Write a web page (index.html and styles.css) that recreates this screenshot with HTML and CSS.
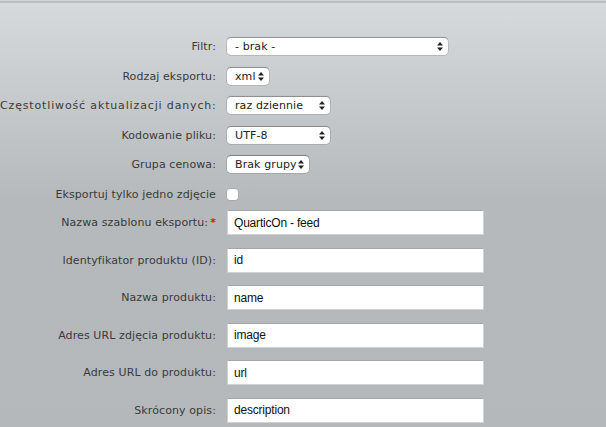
FILE: index.html
```html
<!DOCTYPE html>
<html lang="pl">
<head>
    <meta charset="UTF-8">
    <title>Eksport produktów</title>
    <link rel="stylesheet" href="styles.css">
</head>
<body>
    <div class="panel">
        <form class="form">
            <div class="row">
                <label class="label">Filtr:</label>
                <span class="select-wrap wide">
                    <select><option>- brak -</option></select>
                    <svg class="arrows" width="6" height="9" viewBox="0 0 6 9"><path d="M3 0L6 3.5H0z M3 9L0 5.5H6z" fill="#222"/></svg>
                </span>
            </div>
            <div class="row">
                <label class="label">Rodzaj eksportu:</label>
                <span class="select-wrap xs">
                    <select><option>xml</option></select>
                    <svg class="arrows" width="6" height="9" viewBox="0 0 6 9"><path d="M3 0L6 3.5H0z M3 9L0 5.5H6z" fill="#222"/></svg>
                </span>
            </div>
            <div class="row">
                <label class="label long">Częstotliwość aktualizacji danych:</label>
                <span class="select-wrap md">
                    <select><option>raz dziennie</option></select>
                    <svg class="arrows" width="6" height="9" viewBox="0 0 6 9"><path d="M3 0L6 3.5H0z M3 9L0 5.5H6z" fill="#222"/></svg>
                </span>
            </div>
            <div class="row">
                <label class="label">Kodowanie pliku:</label>
                <span class="select-wrap md">
                    <select><option>UTF-8</option></select>
                    <svg class="arrows" width="6" height="9" viewBox="0 0 6 9"><path d="M3 0L6 3.5H0z M3 9L0 5.5H6z" fill="#222"/></svg>
                </span>
            </div>
            <div class="row">
                <label class="label">Grupa cenowa:</label>
                <span class="select-wrap sm">
                    <select><option>Brak grupy</option></select>
                    <svg class="arrows" width="6" height="9" viewBox="0 0 6 9"><path d="M3 0L6 3.5H0z M3 9L0 5.5H6z" fill="#222"/></svg>
                </span>
            </div>
            <div class="row row-check">
                <label class="label">Eksportuj tylko jedno zdjęcie</label>
                <input type="checkbox" class="check">
            </div>
            <div class="row row-input">
                <label class="label">Nazwa szablonu eksportu:<span class="req">*</span></label>
                <input type="text" class="text" value="QuarticOn - feed">
            </div>
            <div class="row row-input">
                <label class="label">Identyfikator produktu (ID):</label>
                <input type="text" class="text" value="id">
            </div>
            <div class="row row-input">
                <label class="label">Nazwa produktu:</label>
                <input type="text" class="text" value="name">
            </div>
            <div class="row row-input">
                <label class="label">Adres URL zdjęcia produktu:</label>
                <input type="text" class="text" value="image">
            </div>
            <div class="row row-input">
                <label class="label">Adres URL do produktu:</label>
                <input type="text" class="text" value="url">
            </div>
            <div class="row row-input">
                <label class="label">Skrócony opis:</label>
                <input type="text" class="text" value="description">
            </div>
        </form>
    </div>
</body>
</html>
```

FILE: styles.css
```css
html, body {
    margin: 0;
    height: 100%;
}
body {
    font-family: 'DejaVu Sans', Verdana, sans-serif;
    font-size: 11px;
    letter-spacing: 0.1px;
    color: #3a3a3a;
    background: #b5b8ba;
    overflow: hidden;
}
.panel {
    border-top: 1px solid #d2d2d2;
    box-shadow: inset 0 2px 0 #bdbdbd;
    background: linear-gradient(#d7dadc 0px, #b6b9bb 200px, #b5b8ba 100%);
    min-height: 100%;
    padding-top: 37px;
    box-sizing: border-box;
}
.row {
    display: flex;
    align-items: center;
    height: 17px;
    margin-bottom: 12.5px;
}
.label {
    width: 227px;
    box-sizing: border-box;
    flex: none;
    text-align: right;
    padding-right: 11px;
    white-space: nowrap;
}
.label.long {
    letter-spacing: 0.85px;
}
.req {
    color: #e0131f;
    font-weight: bold;
    margin-left: 2px;
}
.select-wrap {
    position: relative;
    display: inline-block;
    height: 17px;
}
.select-wrap select {
    -webkit-appearance: none;
    appearance: none;
    width: 100%;
    height: 17px;
    border: none;
    border-radius: 4px;
    background: #fff;
    box-shadow: 0 0 0 0.5px rgba(0, 0, 0, 0.18), 0 -0.5px 1px rgba(0, 0, 0, 0.25);
    font-family: 'DejaVu Sans', Verdana, sans-serif;
    font-size: 11px;
    letter-spacing: 0.1px;
    color: #222;
    padding: 0 0 0 8px;
    margin: 0;
    outline: none;
}
.select-wrap .arrows {
    position: absolute;
    right: 5px;
    top: 4px;
    pointer-events: none;
}
.wide { width: 221px; }
.xs { width: 42px; }
.md { width: 103px; }
.sm { width: 82px; }
.row-check {
    height: 12px;
    margin-top: 15px;
    margin-bottom: 10px;
}
.check {
    -webkit-appearance: none;
    appearance: none;
    width: 11px;
    height: 11px;
    margin: 0;
    border-radius: 3px;
    background: #fff;
    box-shadow: 0 0 0 0.5px rgba(0, 0, 0, 0.15);
}
.row-input {
    height: 25px;
    margin-bottom: 12.5px;
}
.text {
    width: 257px;
    height: 25px;
    box-sizing: border-box;
    margin: 0;
    border: 1px solid #d0d2d3;
    border-top-color: #a4a6a8;
    background: #fff;
    padding: 0 6px;
    font-family: 'Liberation Sans', Arial, sans-serif;
    font-size: 12px;
    letter-spacing: -0.2px;
    color: #111;
    outline: none;
}
```
